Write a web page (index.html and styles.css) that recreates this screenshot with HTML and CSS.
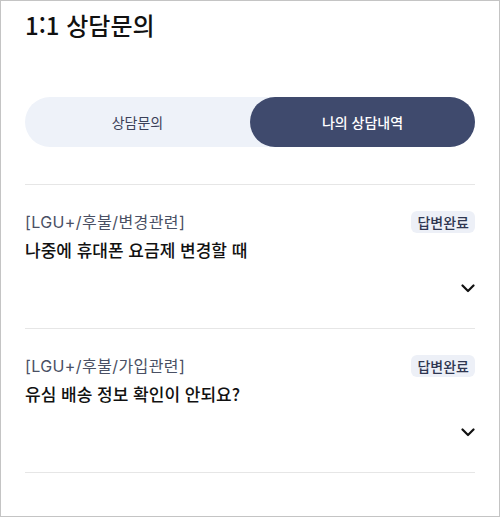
FILE: index.html
```html
<!DOCTYPE html>
<html lang="ko">
<head>
<meta charset="utf-8">
<title>1:1 상담문의</title>
<link rel="stylesheet" href="styles.css">
</head>
<body>
<div class="frame">
  <h1 class="title">1:1 상담문의</h1>
  <div class="tabs">
    <button class="tab">상담문의</button>
    <button class="tab active">나의 상담내역</button>
  </div>
  <ul class="list">
    <li class="item">
      <div class="item-head">
        <span class="category">[LGU+/후불/변경관련]</span>
        <span class="badge">답변완료</span>
      </div>
      <p class="item-title">나중에 휴대폰 요금제 변경할 때</p>
      <div class="item-foot">
        <svg class="chevron" width="14" height="9" viewBox="0 0 14 9"><path d="M1.5 1.5 L7 7 L12.5 1.5" fill="none" stroke="#111" stroke-width="2.2" stroke-linecap="round" stroke-linejoin="round"/></svg>
      </div>
    </li>
    <li class="item">
      <div class="item-head">
        <span class="category">[LGU+/후불/가입관련]</span>
        <span class="badge">답변완료</span>
      </div>
      <p class="item-title">유심 배송 정보 확인이 안되요?</p>
      <div class="item-foot">
        <svg class="chevron" width="14" height="9" viewBox="0 0 14 9"><path d="M1.5 1.5 L7 7 L12.5 1.5" fill="none" stroke="#111" stroke-width="2.2" stroke-linecap="round" stroke-linejoin="round"/></svg>
      </div>
    </li>
  </ul>
</div>
</body>
</html>
```
FILE: styles.css
```css
* { box-sizing: border-box; }
html, body { margin: 0; padding: 0; background: #fff; }
body {
  font-family: "Noto Sans CJK KR", "Noto Sans", sans-serif;
  color: #111;
}
.frame {
  width: 500px;
  height: 517px;
  border: 1px solid #c4c4c4;
  padding: 8px 24px 0;
  overflow: hidden;
}
.title {
  margin: 0;
  font-size: 24px;
  line-height: 32px;
  font-weight: 500;
  color: #111;
}
.tabs {
  margin-top: 56px;
  display: flex;
  height: 50px;
  border-radius: 25px;
  background: #eef2f9;
}
.tab {
  flex: 1;
  border: 0;
  background: transparent;
  border-radius: 25px;
  font-family: inherit;
  font-size: 14px;
  font-weight: 400;
  color: #3a4058;
  padding: 0;
}
.tab.active {
  background: #3f4a6d;
  color: #fff;
  font-weight: 500;
}
.list {
  list-style: none;
  margin: 37px 0 0;
  padding: 0;
  border-top: 1px solid #e6e6e6;
}
.item {
  padding: 26px 0 32px;
  border-bottom: 1px solid #e6e6e6;
}
.item-head {
  display: flex;
  justify-content: space-between;
  align-items: center;
  height: 22px;
}
.category {
  font-family: "Inter", "Noto Sans CJK KR", sans-serif;
  font-size: 16px;
  line-height: 22px;
  letter-spacing: 0.4px;
  color: #4a5064;
}
.badge {
  height: 22px;
  line-height: 22px;
  padding: 0 6px;
  border-radius: 6px;
  background: #edf0f7;
  font-size: 14px;
  font-weight: 500;
  color: #2f3650;
}
.item-title {
  margin: 5px 0 0;
  font-size: 17px;
  line-height: 24px;
  font-weight: 500;
  color: #111;
}
.item-foot {
  margin-top: 18px;
  height: 16px;
  display: flex;
  justify-content: flex-end;
  align-items: center;
}
.chevron { display: block; }
```
